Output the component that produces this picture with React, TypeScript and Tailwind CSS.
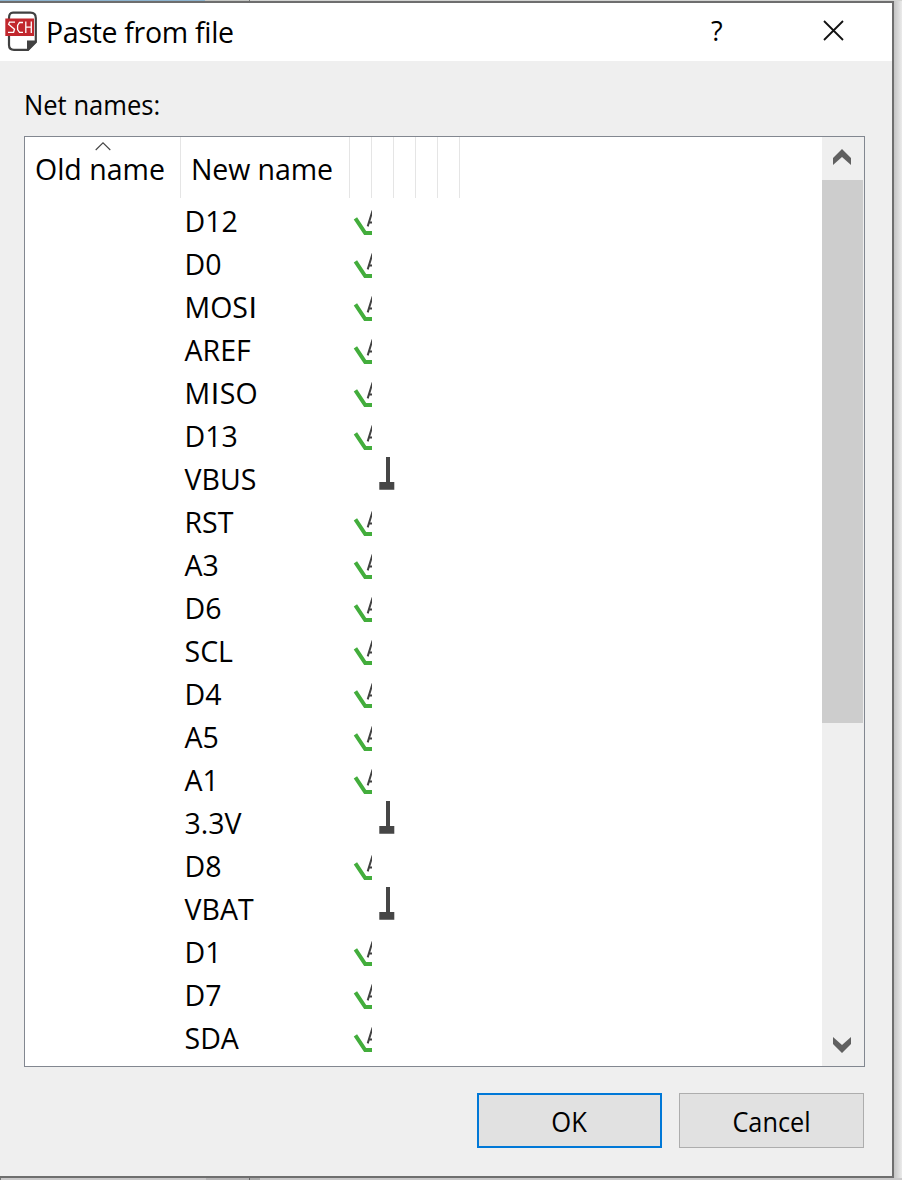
import React from "react";

type Row = { name: string; kind: "label" | "power" };

const powerNets = ["VBUS", "3.3V", "VBAT"];
const rows: Row[] = [
  "D12", "D0", "MOSI", "AREF", "MISO", "D13", "VBUS", "RST", "A3", "D6",
  "SCL", "D4", "A5", "A1", "3.3V", "D8", "VBAT", "D1", "D7", "SDA",
].map((name) => ({ name, kind: powerNets.includes(name) ? "power" : "label" }));

function SchIcon() {
  return (
    <svg width="34" height="42" viewBox="0 0 34 42" className="shrink-0">
      <path d="M8 1.6H25.5Q30.8 1.6 30.8 7V31L23 38.8H9Q4 38.8 4 34V7Q4 1.6 8 1.6Z" fill="#fff" stroke="#414141" strokeWidth="2.2" />
      <path d="M22 29.5H31.5V31L23 39.9H22Z" fill="#414141" />
      <rect x="0.3" y="7.5" width="28.7" height="17.5" fill="#c1272d" />
      <g fill="none" stroke="#fff" strokeWidth="1.3">
        <path d="M10 11.2H4.5L3.6 13.2L9.5 18.2L8.6 21.3H3" />
        <path d="M18 11.5H14.5L12.6 14.5V18.5L14.5 21.3H18" />
        <path d="M20.8 10.5V22M26.3 10.5V22M20.8 16.2H26.3" />
      </g>
    </svg>
  );
}

function LabelIcon() {
  return (
    <svg width="22" height="43" viewBox="0 0 22 43">
      <path d="M5.4 18.4L15.2 33H22" fill="none" stroke="#43ad3c" strokeWidth="4" />
      <path d="M17.7 26.4L22.6 10.5M19.3 22.5H22" fill="none" stroke="#414141" strokeWidth="2" />
    </svg>
  );
}

function PowerIcon() {
  return (
    <svg width="22" height="43" viewBox="0 0 22 43" className="overflow-visible">
      <path d="M14 -1H18V24H22.3V31.8H7.3V24H14Z" fill="#464646" />
    </svg>
  );
}

function Dividers() {
  return (
    <>
      {[0, 1, 2, 3, 4].map((i) => (
        <div key={i} className="w-[22px] border-r border-[#e5e5e5]" />
      ))}
    </>
  );
}

function NetName({ text }: { text: string }) {
  return (
    <>
      {text.split("").map((ch, i) =>
        ch === "I" ? (
          <span key={i} className="inline-block w-[9.6px] text-center font-[family-name:Lato,sans-serif] leading-none">I</span>
        ) : (
          ch
        ),
      )}
    </>
  );
}

export default function App() {
  return (
    <div className="flex h-[1180px] w-[902px] flex-col overflow-hidden bg-[#c9c8c9] font-[family-name:'Open_Sans',sans-serif] text-black">
      <div className="flex h-px shrink-0">
        <div className="w-[205px] bg-[#8db4cf]" />
        <div className="w-[45px] border-r border-[#777] bg-[#c5c7c4]" />
        <div className="flex-1 bg-[#d3d4d2]" />
      </div>
      <div className="flex h-[1177px] shrink-0">
        <div className="flex w-[894px] shrink-0 flex-col border-y-2 border-r-2 border-[#6e6e6e] bg-[#efefef]">
          <header className="flex h-[58px] shrink-0 items-center bg-white pl-[5px]">
            <SchIcon />
            <h1 className="ml-[7px] w-[640px] whitespace-nowrap text-[28.5px] tracking-[-0.3px]">Paste from file</h1>
            <span className="w-8 pb-[2px] pl-[25px] text-[27px]">?</span>
            <svg width="21" height="21" viewBox="0 0 21 21" className="mb-[3px] ml-auto mr-[48px]">
              <path d="M1 1L20 20M20 1L1 20" stroke="#111" strokeWidth="1.8" />
            </svg>
          </header>
          <main className="flex flex-1 flex-col pl-6 pt-[24px]">
            <p className="h-[51px] text-[27.5px] leading-[40px]"><span className="inline-block origin-left scale-x-[0.93]">Net names:</span></p>
            <section className="flex h-[931px] w-[841px] shrink-0 border border-[#828790] bg-white">
              <div className="flex-1">
                <div className="flex h-[61px] text-[28.5px]">
                  <div className="flex w-[156px] flex-col border-r border-[#e5e5e5] pl-[10px]">
                    <svg width="16" height="9" viewBox="0 0 16 9" className="ml-[60px] mt-[5px] shrink-0">
                      <path d="M0.7 8L8 0.8L15.3 8" fill="none" stroke="#444" strokeWidth="1.1" />
                    </svg>
                    <span className="whitespace-nowrap leading-[36px]">Old name</span>
                  </div>
                  <div className="w-[169px] whitespace-nowrap border-r border-[#e5e5e5] pl-[10px] pt-[14px] leading-[36px] tracking-[-0.1px]">New name</div>
                  <Dividers />
                </div>
                <div className="pt-[2px]">
                  {rows.map((row) => (
                    <div key={row.name} className="flex h-[43px]">
                      <div className="ml-[159px] w-[166px] whitespace-nowrap pl-[0.5px] text-[28.5px] leading-[43px]"><NetName text={row.name} /></div>
                      {row.kind === "label" ? <LabelIcon /> : <div className="pl-[22px]"><PowerIcon /></div>}
                    </div>
                  ))}
                </div>
              </div>
              <div className="flex w-[42px] flex-col bg-[#efefef]">
                <svg width="40" height="43" viewBox="0 0 40 43" className="shrink-0">
                  <path d="M11 21L20 12L29 21V28L20 20L11 28Z" fill="#606060" />
                </svg>
                <div className="h-[543px] w-[41px] bg-[#cdcdcd]" />
                <svg width="40" height="43" viewBox="0 0 40 43" className="mt-auto shrink-0">
                  <path d="M11 14L20 22L29 14V21L20 30L11 21Z" fill="#606060" />
                </svg>
              </div>
            </section>
            <footer className="mt-[26px] flex gap-[17px] pl-[453px] text-[27.5px]">
              <button className="h-[55px] w-[185px] border-2 border-[#0078d7] bg-[#e1e1e1] pt-[2px]"><span className="inline-block scale-x-[0.93]">OK</span></button>
              <button className="h-[55px] w-[185px] border border-[#adadad] bg-[#e1e1e1] pt-[2px]"><span className="inline-block scale-x-[0.92]">Cancel</span></button>
            </footer>
          </main>
        </div>
        <div className="flex-1 bg-gradient-to-r from-[#c4c4c4] to-[#ebebeb]" />
      </div>
      <div className="flex h-[2px] shrink-0">
        <div className="w-[206px] border-l border-[#777] bg-[#c9c8c9]" />
        <div className="w-[44px] border-r border-[#666] bg-[#b5b4b5]" />
        <div className="w-[10px] bg-[#aaa]" />
        <div className="flex-1 bg-[#c9c8c9]" />
      </div>
    </div>
  );
}
